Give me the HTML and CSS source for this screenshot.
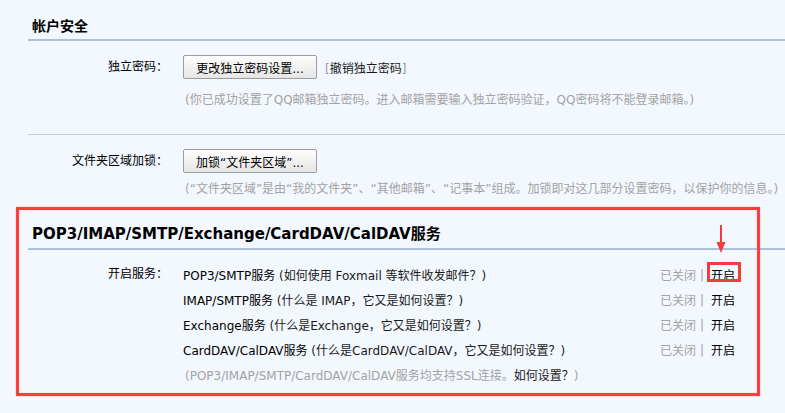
FILE: index.html
```html
<!DOCTYPE html>
<html lang="zh-CN">
<head>
<meta charset="utf-8">
<title>帐户安全</title>
<link rel="stylesheet" href="styles.css">
</head>
<body>
<div class="page">
  <section class="block">
    <h2 class="block-title">帐户安全</h2>
    <div class="field field-first">
      <div class="label">独立密码：</div>
      <div class="content">
        <div class="line">
          <button class="btn">更改独立密码设置...</button>
          <span class="bracket">[<a class="link">撤销独立密码</a>]</span>
        </div>
        <p class="hint hint-first">(你已成功设置了QQ邮箱独立密码。进入邮箱需要输入独立密码验证，QQ密码将不能登录邮箱。)</p>
      </div>
    </div>
    <div class="divider"></div>
    <div class="field">
      <div class="label">文件夹区域加锁：</div>
      <div class="content">
        <div class="line">
          <button class="btn">加锁“文件夹区域”...</button>
        </div>
        <p class="hint hint-second">(“文件夹区域”是由“我的文件夹”、“其他邮箱”、“记事本”组成。加锁即对这几部分设置密码，以保护你的信息。)</p>
      </div>
    </div>
  </section>

  <section class="block services">
    <h2 class="block-title title-latin">POP3/IMAP/SMTP/Exchange/CardDAV/CalDAV服务</h2>
    <div class="field field-services">
      <div class="label label-row">开启服务：</div>
      <ul class="service-list">
        <li class="service">
          <span class="desc">POP3/SMTP服务 <a class="link">(如何使用 Foxmail 等软件收发邮件？)</a></span>
          <span class="status"><span class="off">已关闭</span><span class="sep">|</span><a class="on on-marked">开启</a></span>
        </li>
        <li class="service">
          <span class="desc">IMAP/SMTP服务 <a class="link">(什么是 IMAP，它又是如何设置？)</a></span>
          <span class="status"><span class="off">已关闭</span><span class="sep">|</span><a class="on">开启</a></span>
        </li>
        <li class="service">
          <span class="desc">Exchange服务 <a class="link">(什么是Exchange，它又是如何设置？)</a></span>
          <span class="status"><span class="off">已关闭</span><span class="sep">|</span><a class="on">开启</a></span>
        </li>
        <li class="service">
          <span class="desc">CardDAV/CalDAV服务 <a class="link">(什么是CardDAV/CalDAV，它又是如何设置？)</a></span>
          <span class="status"><span class="off">已关闭</span><span class="sep">|</span><a class="on">开启</a></span>
        </li>
        <li class="service service-note">
          <span class="desc">(POP3/IMAP/SMTP/CardDAV/CalDAV服务均支持SSL连接。<a class="link">如何设置？</a>)</span>
        </li>
      </ul>
    </div>
  </section>

  <div class="highlight-box"></div>
  <svg class="arrow" width="12" height="30" viewBox="0 0 12 30" aria-hidden="true">
    <line x1="6" y1="0" x2="6" y2="20" stroke="#f03c3c" stroke-width="2"/>
    <polygon points="1.5,17 10.5,17 6,28" fill="#f03c3c"/>
  </svg>
</div>
</body>
</html>
```

FILE: styles.css
```css
html, body {
  margin: 0;
  padding: 0;
}

body {
  background: #f3f7fe;
  font-family: "DejaVu Sans", "Noto Sans CJK SC", sans-serif;
  font-size: 12px;
  color: #1a1a1a;
  width: 785px;
  height: 413px;
  overflow: hidden;
}

.page {
  position: relative;
  padding-left: 28px;
  height: 413px;
}

.block-title {
  margin: 0;
  padding: 15px 0 4px 4px;
  font-size: 14px;
  line-height: 20px;
  font-weight: bold;
  color: #000;
  border-bottom: 2px solid #a9c1e1;
  font-family: "Noto Sans CJK SC", sans-serif;
}

.services {
  margin-top: 10px;
}

.title-latin {
  font-family: "DejaVu Sans", "Noto Sans CJK SC", sans-serif;
  font-size: 15px;
}

.field {
  display: grid;
  grid-template-columns: 140px 1fr;
  column-gap: 15px;
  margin-top: 14px;
}

.label {
  text-align: right;
  line-height: 24px;
  color: #000;
}

.label-row {
  line-height: 25px;
}

.content {
  display: flex;
  flex-direction: column;
}

.line {
  display: flex;
  align-items: center;
  height: 24px;
}

.btn {
  width: 134px;
  height: 24px;
  padding: 0;
  border: 1px solid #9c9c9c;
  border-radius: 2px;
  background: linear-gradient(#fdfdfd, #e6e6e6);
  font-family: "DejaVu Sans", "Noto Sans CJK SC", sans-serif;
  font-size: 12px;
  color: #000;
}

.bracket {
  margin-left: 8px;
  color: #9a9a9a;
}

.link {
  color: #1a1a1a;
}

.hint {
  margin: 0;
  padding-left: 2px;
  line-height: 20px;
  color: #a3a3a3;
}

.hint-first {
  margin-top: 11px;
}

.hint-second {
  margin-top: 6px;
}

.divider {
  height: 1px;
  margin-top: 24px;
  background: #c6ccd9;
}

.field-services {
  margin-top: 12px;
}

.service-list {
  list-style: none;
  margin: 0;
  padding: 0 50px 0 0;
}

.service {
  display: flex;
  align-items: center;
  height: 25px;
  color: #000;
}

.desc {
  flex: 1;
  white-space: nowrap;
}

.service-note .desc {
  color: #a3a3a3;
  padding-left: 2px;
}

.status {
  display: flex;
  align-items: center;
  white-space: nowrap;
}

.off {
  color: #a3a3a3;
}

.sep {
  color: #a3a3a3;
  margin: 0 7px 0 4px;
}

.on {
  color: #000;
  position: relative;
}

.on-marked::after {
  content: "";
  position: absolute;
  left: -4px;
  right: -6px;
  top: -4px;
  bottom: 1px;
  border: 3px solid #f03c3c;
}

.highlight-box {
  position: absolute;
  left: 16px;
  top: 207px;
  width: 744px;
  height: 189px;
  box-sizing: border-box;
  border: 3px solid #ff3d3d;
  box-shadow: 0 0 1px #ff7070, inset 0 0 1px #ff7070;
  pointer-events: none;
}

.arrow {
  position: absolute;
  left: 715px;
  top: 225px;
}
```
